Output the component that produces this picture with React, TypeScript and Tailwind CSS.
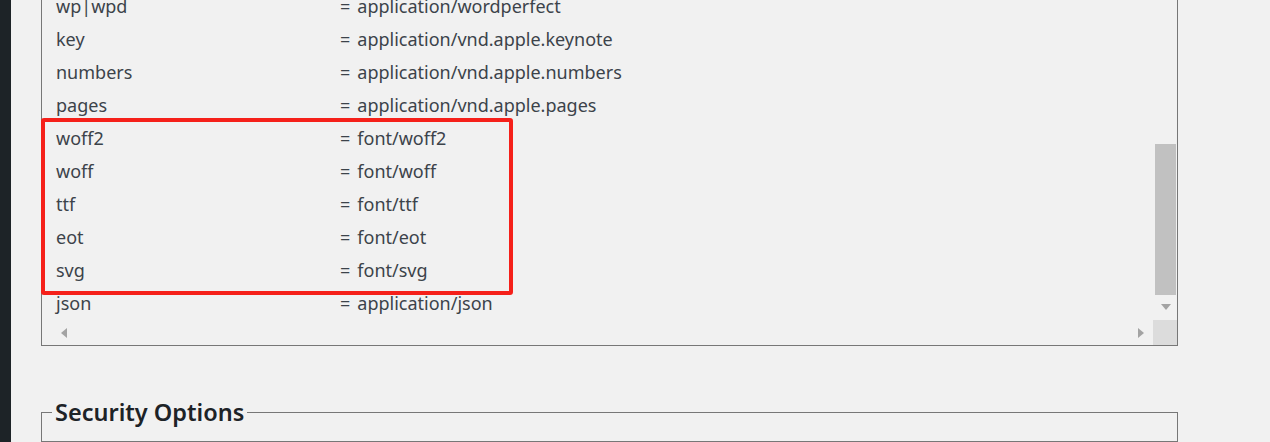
import type { FC } from 'react';

const MIME_ROWS: [string, string][] = [
  ['wp|wpd', 'application/wordperfect'],
  ['key', 'application/vnd.apple.keynote'],
  ['numbers', 'application/vnd.apple.numbers'],
  ['pages', 'application/vnd.apple.pages'],
  ['woff2', 'font/woff2'],
  ['woff', 'font/woff'],
  ['ttf', 'font/ttf'],
  ['eot', 'font/eot'],
  ['svg', 'font/svg'],
  ['json', 'application/json'],
];

const MimeList: FC = () => (
  <div className="relative -mt-[11px] w-[1137px] h-[357px] border border-[#777777] bg-[#f1f1f1] flex flex-col">
    <div className="flex flex-1 min-h-0">
      <div className="flex-1 flex flex-col justify-end pl-[14px]">
        {MIME_ROWS.map(([ext, type]) => (
          <div key={ext} className="flex h-[33px] items-center">
            <span className="w-[284px]">{ext}</span>
            <span>=</span>
            <span className="ml-[7px]">{type}</span>
          </div>
        ))}
      </div>
      {/* vertical scrollbar */}
      <div className="w-[23px] flex flex-col justify-end items-center pb-[10px]">
        <div className="w-[21px] h-[151px] bg-[#c1c1c1]" />
        <div className="mt-[9px] w-0 h-0 border-l-[5px] border-r-[5px] border-t-[6px] border-l-transparent border-r-transparent border-t-[#a3a3a3]" />
      </div>
    </div>
    {/* horizontal scrollbar */}
    <div className="flex h-[25px] items-center">
      <div className="flex-1 flex items-center justify-between pl-[19px] pr-[9px]">
        <div className="w-0 h-0 border-t-[5px] border-b-[5px] border-r-[6px] border-t-transparent border-b-transparent border-r-[#a3a3a3]" />
        <div className="w-0 h-0 border-t-[5px] border-b-[5px] border-l-[6px] border-t-transparent border-b-transparent border-l-[#a3a3a3]" />
      </div>
      <div className="w-[24px] h-[25px] bg-[#dcdcdc]" />
    </div>
    {/* highlight */}
    <div className="absolute left-[-1px] top-[128px] w-[472px] h-[177px] border-[4px] border-[#f5201a] rounded-[3px] pointer-events-none" />
  </div>
);

export default function App() {
  return (
    <div className="flex w-[1270px] h-[442px] overflow-hidden bg-[#f1f1f1] text-[#3c434a] text-[18px] font-['Noto_Sans',sans-serif]">
      <div className="w-[11px] shrink-0 bg-[#1d2327]" />
      <div className="pl-[30px] flex flex-col">
        <MimeList />
        <fieldset className="mt-[51px] w-[1137px] h-[60px] border border-[#777777] px-0">
          <legend className="ml-[10px] px-[3px] text-[23.5px] font-semibold text-[#1d2327] leading-[30px]">Security Options</legend>
        </fieldset>
      </div>
    </div>
  );
}
